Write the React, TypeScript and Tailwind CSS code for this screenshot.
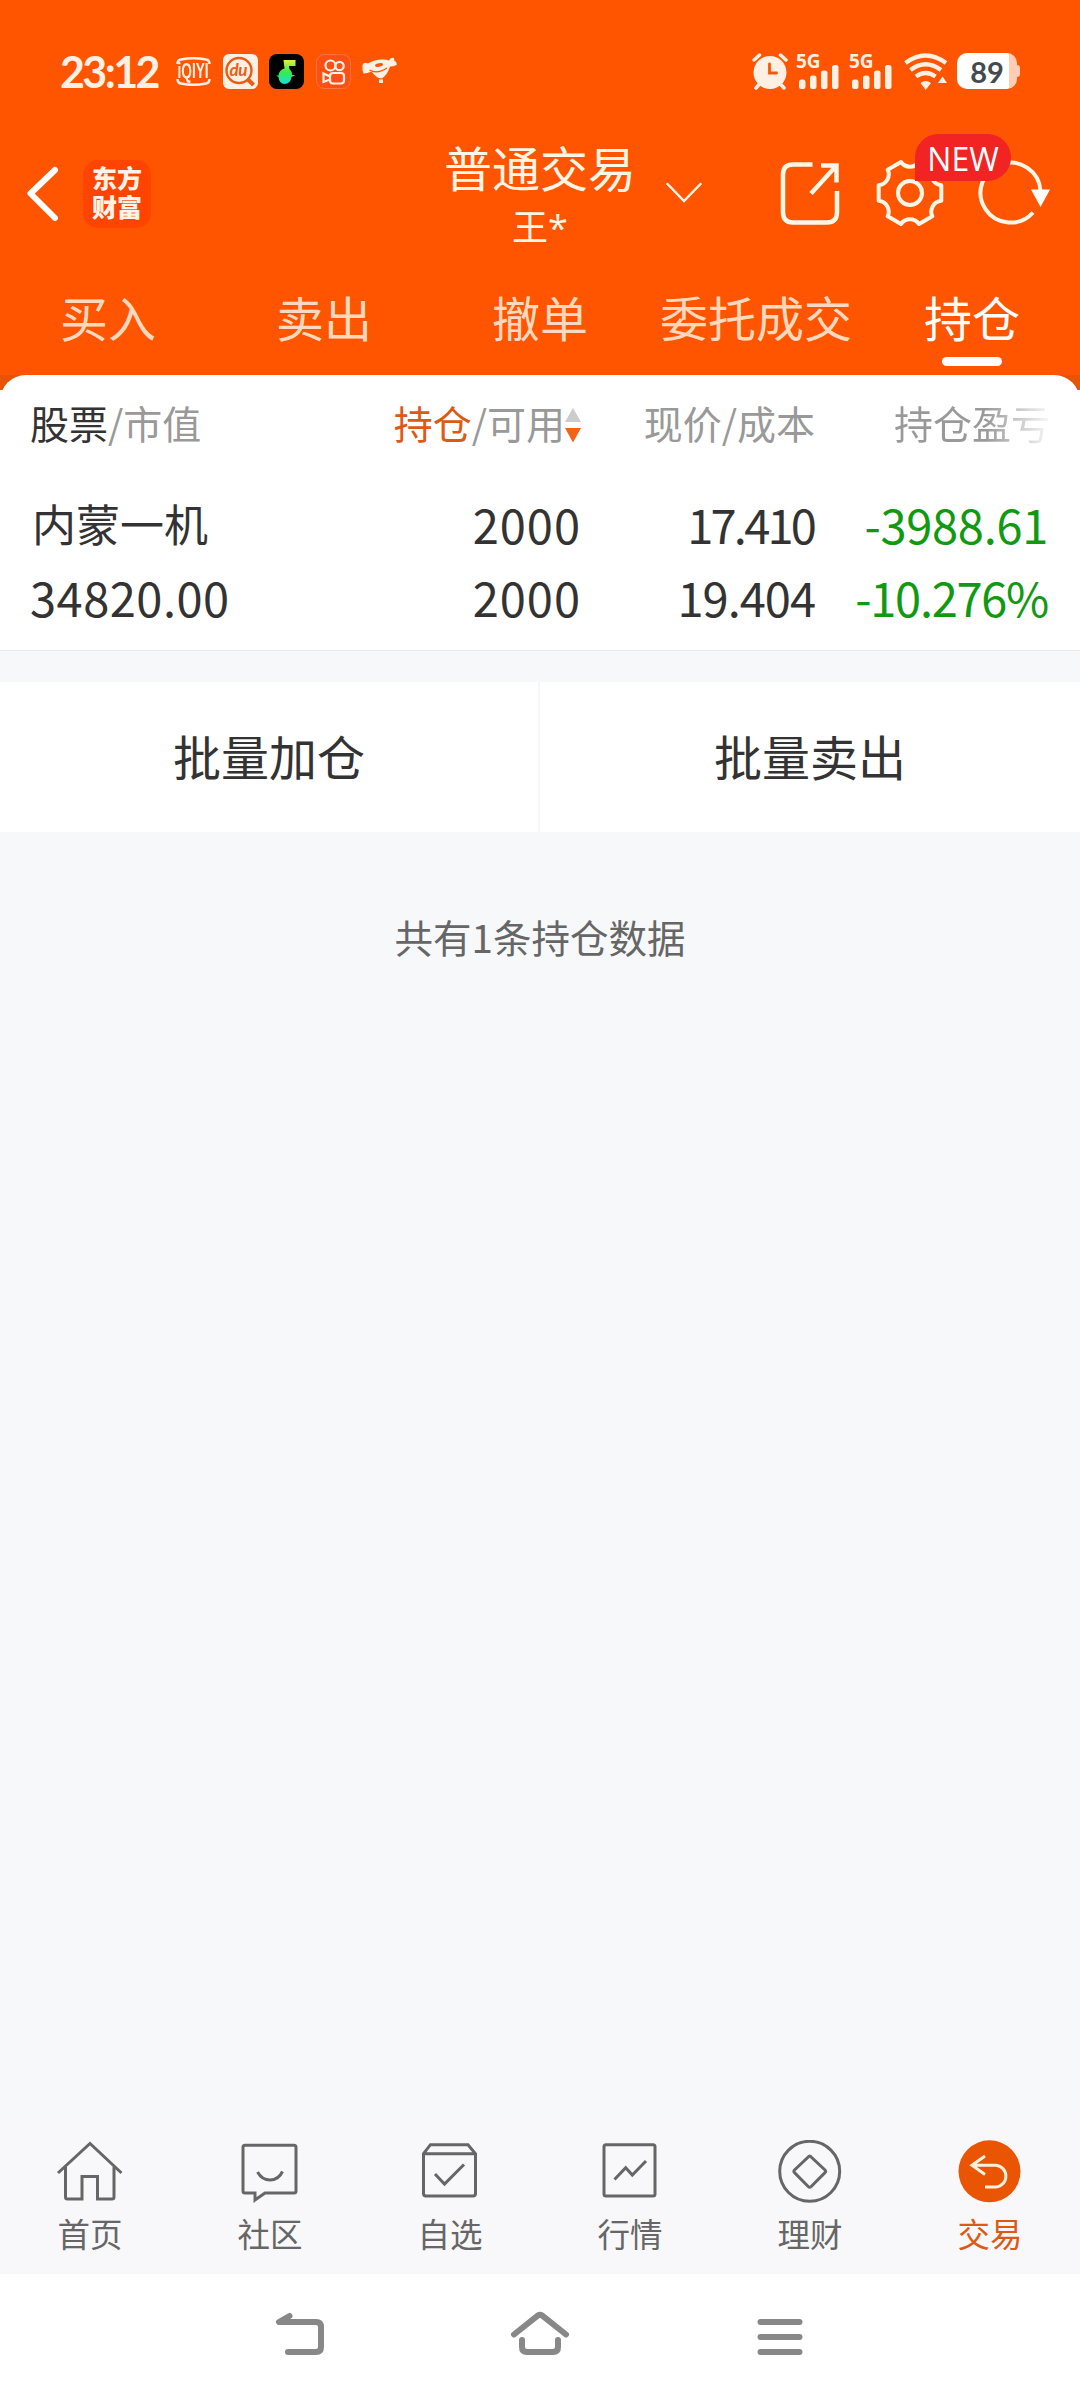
import type { ReactNode } from 'react'

interface TabItem {
  label: string
  active?: boolean
  icon?: ReactNode
}

const TRADE_TABS: TabItem[] = [
  { label: '买入' },
  { label: '卖出' },
  { label: '撤单' },
  { label: '委托成交' },
  { label: '持仓', active: true },
]

const BOTTOM_TABS: TabItem[] = [
  {
    label: '首页',
    icon: (
      <>
        <path d="M4 33 L36 3.5 L67.500 33" />
        <path d="M11.500 27 V57 Q11.500 59 13.500 59 H28 V36.500 H43.500 V59 H58 Q60 59 60 57 V27" />
      </>
    ),
  },
  {
    label: '社区',
    icon: (
      <>
        <path d="M11 5.300 H60 Q62 5.300 62 7.300 V51 Q62 53 60 53 H31 L21 60 V53 H11 Q9 53 9 51 V7.300 Q9 5.300 11 5.300 Z" />
        <path d="M23.500 32 Q28 40 36 40 Q44.500 40 48.500 31.500" />
      </>
    ),
  },
  {
    label: '自选',
    icon: (
      <>
        <path d="M9.500 13.700 L16.500 4.700 H54 L61.500 13.700 V53.500 Q61.500 56 59 56 H12 Q9.500 56 9.500 53.500 Z M9.500 13.700 H61.500" />
        <path d="M21 34 L30.500 44 L50 24.500" />
      </>
    ),
  },
  {
    label: '行情',
    icon: (
      <>
        <rect x="10" y="4.700" width="51" height="51.300" rx="2" />
        <path d="M20.500 39.500 L31.700 27.700 L38.300 35 L52 21" />
      </>
    ),
  },
  {
    label: '理财',
    icon: (
      <>
        <circle cx="35.700" cy="31.300" r="30" />
        <path d="M34.200 17 Q35.700 15 37.200 17 L51 30 Q52.200 31.300 51 32.600 L37.200 46.500 Q35.700 48 34.200 46.500 L20.500 32.600 Q19.300 31.300 20.500 30 Z" />
      </>
    ),
  },
  {
    label: '交易',
    active: true,
    icon: (
      <>
        <circle cx="35.500" cy="31.300" r="31" fill="#ea5504" stroke="none" />
        <path d="M31 16 L18 25.300 L31 34.500 M18 25.300 H42 A10.900 10.900 0 0 1 42 47 H31" stroke="#fff0dc" strokeLinecap="butt" />
      </>
    ),
  },
]

function SignalIcon() {
  return (
    <div className="flex w-[43px] flex-col">
      <span className="-ml-[2px] h-[13px] font-['Open_Sans'] text-[19px] leading-[14px] font-bold">5G</span>
      <svg viewBox="0 0 43 24" className="-mt-[2px] h-6 w-[43px]" fill="currentColor">
        <rect x="1" y="14.500" width="6.500" height="9.500" rx="2.500" />
        <rect x="12" y="10.500" width="6.500" height="13.500" rx="2.500" />
        <rect x="23" y="5.500" width="6.500" height="18.500" rx="2.500" />
        <rect x="34" y="0" width="6.500" height="24" rx="2.500" />
      </svg>
    </div>
  )
}

function StatusBar() {
  return (
    <div className="flex h-[110px] items-center pt-8 pl-[60px] text-[#fff0e4]">
      <span className="w-[116px] shrink-0 font-['Lato'] text-[43px] leading-none font-bold tracking-[-2.600px]">23:12</span>

      {/* Notification icons */}
      <div className="flex items-center gap-[11.500px]">
        <div className="relative flex h-[29px] w-[35px] items-center justify-center">
          <svg viewBox="0 0 35 29" className="absolute inset-0" fill="none" stroke="currentColor" strokeWidth="2.500">
            <path d="M1.500 7 Q1.500 3 5 2.500 Q17.500 0 30 2.500 Q33.500 3 33.500 7 M1.500 22 Q1.500 26 5 26.500 Q17.500 29 30 26.500 Q33.500 26 33.500 22" />
          </svg>
          <span className="shrink-0 scale-x-[0.62] font-['Liberation_Sans'] text-[22px] leading-none font-bold">iQIYI</span>
        </div>
        <div className="relative flex size-[35px] rounded-[6px] bg-[#fff0e4] text-[#ea5c14]">
          <svg viewBox="0 0 35 35" className="absolute inset-0" fill="none" stroke="currentColor">
            <circle cx="16" cy="16.500" r="12.500" strokeWidth="2.400" />
            <path d="M25 25.500 L30.500 31" strokeWidth="4" />
          </svg>
          <span className="ml-[7px] font-['Lato'] text-[17px] leading-[31px] font-bold tracking-[-0.500px] italic">du</span>
        </div>
        <svg viewBox="0 0 35 35" className="size-[35px]">
          <defs>
            <linearGradient id="note" x1="0" y1="0" x2="0" y2="1">
              <stop offset="0" stopColor="#e5f03c" />
              <stop offset="0.500" stopColor="#35ec4e" />
              <stop offset="1" stopColor="#18dfd8" />
            </linearGradient>
          </defs>
          <rect width="35" height="35" rx="8" fill="#000" />
          <path d="M14.500 6 H26.500 V12 H20 L20.500 15 Q23 17 23 21 H26.500 L22.500 23 Q21.500 30 15.500 30 Q10 29.500 9.500 23 L7 21.500 H9.500 Q10 16 15.500 14.500 Z" fill="url(#note)" />
        </svg>
        <svg viewBox="0 0 35 35" className="size-[35px]" fill="none" stroke="currentColor" strokeWidth="2.200">
          <rect x="0.500" y="0.500" width="34" height="34" rx="8" fill="#ff4f12" stroke="#ff7440" strokeWidth="1" />
          <circle cx="14.500" cy="11.500" r="5" />
          <circle cx="23.500" cy="12" r="4.200" />
          <rect x="14" y="19" width="14" height="10.500" rx="3" />
          <path d="M14 22.500 L7.500 19.500 V28 L14 25.500" />
        </svg>
        <svg viewBox="0 0 35 28" className="h-7 w-[35px]">
          <path d="M0.500 8 Q2 4.500 6 6.500 Q13 2.500 20 2.500 Q25 2.500 27 3.500 Q28.500 0 32 1 L32.500 4 Q35.500 5 34.500 8 Q30 10 28 9.500 Q25 19 19.500 21.500 Q14 21 9.500 14.500 Q4 17 1.500 16.500 L0.500 13 Z M17 22.500 H21 V26 H17 Z" fill="currentColor" />
          <path d="M7.500 13 Q15 17.500 25 11" fill="none" stroke="#ff5500" strokeWidth="1.200" />
          <ellipse cx="17" cy="8" rx="4" ry="1.800" fill="#ff5500" transform="rotate(-12 17 8)" />
        </svg>
      </div>

      {/* System icons */}
      <div className="ml-[355px] flex items-center">
        <svg viewBox="0 0 36 37" className="h-[37px] w-9" fill="none" stroke="currentColor" strokeLinecap="round">
          <circle cx="18" cy="19.500" r="16.500" fill="currentColor" stroke="none" />
          <path d="M2 7 L7.500 2 M34 7 L28.500 2 M4 35 L7.500 31 M32 35 L28.500 31" strokeWidth="3.500" />
          <path d="M17.500 11 V20 H24.500" stroke="#ff5500" strokeWidth="2.800" />
        </svg>
        <div className="ml-[10px] flex gap-[10px]">
          <SignalIcon />
          <SignalIcon />
        </div>
        <svg viewBox="0 0 44 37" className="ml-[10px] h-[37px] w-11" fill="none" stroke="currentColor" strokeWidth="4.200">
          <path d="M1.500 10 Q21.500 -5 42 10 M6.500 17 Q21.500 5.500 37 17 M12 23.500 Q21.500 16.500 31.500 23.500" />
          <path d="M16.500 30 Q21.500 26 27 30 L21.700 37 Z M34 30 L38.500 23.500 L43 30 Z" fill="currentColor" stroke="none" />
        </svg>
        <div className="ml-[9px] flex items-center">
          <div className="flex h-9 w-[60px] items-center justify-center rounded-[10px] bg-[linear-gradient(90deg,#fff_52px,#ffcdb4_52px)] font-['Lato'] text-[29px] leading-none font-bold text-[#444a50]">
            89
          </div>
          <div className="h-3 w-[3px] rounded-r-sm bg-[#ffcdb4]" />
        </div>
      </div>
    </div>
  )
}

function Header() {
  return (
    <div className="grid h-[168px] grid-cols-[1fr_192px_1fr]">
      <div className="flex pt-[50px] pl-6">
        <svg viewBox="0 0 38 66" className="h-[66px] w-[38px]" fill="none" stroke="#fff" strokeWidth="6" strokeLinecap="round">
          <path d="M31 10 L6.500 33.500 L31 58" strokeLinejoin="round" />
        </svg>
        <div className="ml-[21px] h-[68px] w-[68px] rounded-[15px] bg-[#ff4400] px-[9px] pt-[3px] text-[25px] leading-[29px] font-black break-all text-[#fff3ea]">
          东方财富
        </div>
      </div>

      <div className="pt-[30px] text-center text-[#fff6e6]">
        <div className="text-[48px] leading-[52px] whitespace-nowrap">普通交易</div>
        <div className="mt-[13px] text-[36px] leading-[40px]">
          王<span className="font-['Open_Sans']">*</span>
        </div>
      </div>

      <div className="flex items-start pt-12 pl-[30px]">
        <svg viewBox="0 0 36 68" className="h-[68px] w-9" fill="none" stroke="#fff6e6" strokeWidth="2.500">
          <path d="M1.500 26 L18 43 L34.500 26" strokeLinecap="round" />
        </svg>
        <svg viewBox="0 0 60 68" className="ml-[78px] h-[68px] w-[60px]" fill="none" stroke="#fff6e6" strokeWidth="4.500">
          <path d="M32.500 6.500 H13 Q3 6.500 3 16.500 V54 Q3 64.500 13 64.500 H47 Q57 64.500 57 54 V33" />
          <path d="M41 7.500 H56.500 V24.500 M56.500 7.500 L31 35.500" />
        </svg>
        <div className="relative ml-9">
          <svg viewBox="-34 -35 68 68" className="size-[68px]" fill="none" stroke="#fff6e6" strokeWidth="4" strokeLinejoin="round">
            <path d="M31.300 -7.700 V7.700 A11 11 0 0 0 22.300 23.300 L9 31 A11 11 0 0 0 -9 31 L-22.300 23.300 A11 11 0 0 0 -31.300 7.700 V-7.700 A11 11 0 0 0 -22.300 -23.300 L-9 -31 A11 11 0 0 0 9 -31 L22.300 -23.300 A11 11 0 0 0 31.300 -7.700 Z" />
            <circle r="12" />
          </svg>
          <div className="absolute -top-6 left-[39px] z-10 h-[47px] w-24 rounded-full rounded-bl-none bg-[#f12323] text-center font-['Open_Sans'] text-[32px] leading-[49px] text-white">
            NEW
          </div>
        </div>
        <svg viewBox="0 0 72 68" className="ml-[34px] h-[68px] w-[72px]" fill="none" stroke="#fff6e6" strokeWidth="4">
          <path d="M62.500 33 A30 30 0 1 0 55 54.500" />
          <path d="M53 31.500 H72 L62.500 49 Z" fill="#fff" stroke="none" />
        </svg>
      </div>
    </div>
  )
}

function TradeTabs() {
  return (
    <div className="grid h-[97px] grid-cols-5 text-[48px] leading-[56px]">
      {TRADE_TABS.map(tab => (
        <div key={tab.label} className={`flex flex-col items-center pt-[10px] whitespace-nowrap ${tab.active ? 'text-white' : 'text-[#ffd9bf]'}`}>
          {tab.label}
          {tab.active && <div className="mt-[13px] h-[9px] w-[60px] rounded-full bg-white" />}
        </div>
      ))}
    </div>
  )
}

function Holdings() {
  return (
    <div className="bg-[linear-gradient(#e85406_15px,#fff_15px)]">
      <div className="h-[275px] rounded-t-[26px] bg-white pr-8 pl-[30px]">
        <div className="grid h-[94px] grid-cols-[1fr_234px_233px] items-center text-right text-[39px] text-[#999]">
          <div className="grid grid-cols-2 items-center">
            <div className="text-left">
              <span className="text-[#333]">股票</span>/市值
            </div>
            <div className="flex items-center justify-end">
              <span className="text-[#dd5a14]">持仓</span>/可用
              <svg viewBox="0 0 16 36" className="mt-[6px] h-9 w-4">
                <path d="M8 1 L16 15 H0 Z" fill="#ccc" />
                <path d="M0 21 H16 L8 35.500 Z" fill="#f0641a" />
              </svg>
            </div>
          </div>
          <div>现价/成本</div>
          <div className="-mr-[2px] bg-[linear-gradient(90deg,#999_170px,#fff_240px)] bg-clip-text text-transparent">持仓盈亏</div>
        </div>

        <div className="mt-[18px] grid grid-cols-[1fr_234px_233px] text-right text-[47px] leading-[73px] text-[#333]">
          <div className="grid grid-cols-2">
            <div className="pl-[2px] text-left text-[44px]">内蒙一机</div>
            <div className="tracking-[1px]">2000</div>
            <div className="text-left tracking-[0.500px]">34820.00</div>
            <div className="tracking-[1px]">2000</div>
          </div>
          <div>
            <div className="pr-[1px] tracking-[-2.800px]">17.410</div>
            <div className="tracking-[-1px]">19.404</div>
          </div>
          <div className="text-[#119911]">
            <div className="tracking-[-0.300px]">-3988.61</div>
            <div className="tracking-[-1.300px]">-10.276%</div>
          </div>
        </div>
      </div>
      <div className="h-px bg-[#e8ebee]" />
    </div>
  )
}

function BottomTabs() {
  return (
    <div className="grid h-[156px] grid-cols-6 bg-[#f8f8fa]">
      {BOTTOM_TABS.map(tab => (
        <div key={tab.label} className={`flex flex-col items-center pt-[22px] ${tab.active ? 'text-[#dd5a14]' : 'text-[#666]'}`}>
          <svg viewBox="0 0 72 64" className="h-16 w-[72px]" fill="none" stroke="currentColor" strokeWidth="3">
            {tab.icon}
          </svg>
          <span className="mt-[8px] text-[32.500px] leading-[42px]">{tab.label}</span>
        </div>
      ))}
    </div>
  )
}

function SystemNav() {
  return (
    <div className="grid h-[126px] grid-cols-3 justify-items-center bg-white px-[180px] pt-8">
      <svg viewBox="0 0 60 60" className="size-[60px]" fill="none" stroke="#888" strokeWidth="6" strokeLinecap="round">
        <path d="M19.500 10 L9 16 H46 Q51 16 51 21 V41 Q51 46 46 46 H18" strokeLinejoin="round" />
      </svg>
      <svg viewBox="0 0 60 60" className="size-[60px]" fill="none" stroke="#888" strokeWidth="6" strokeLinecap="round">
        <path d="M4 28.500 L28 9.500 Q30 8 32 9.500 L56 28.500 M12 34 V41 Q12 46 17 46 H43 Q48 46 48 41 V34" />
      </svg>
      <svg viewBox="0 0 60 60" className="size-[60px]" fill="none" stroke="#888" strokeWidth="6" strokeLinecap="round">
        <path d="M10.500 16 H49.500 M10.500 31 H49.500 M10.500 46 H49.500" />
      </svg>
    </div>
  )
}

export default function App() {
  return (
    <div className="flex h-[2400px] w-[1080px] flex-col overflow-hidden bg-[#f7f8fa] font-['Noto_Sans_CJK_SC',sans-serif]">
      <div className="bg-[#ff5500]">
        <StatusBar />
        <Header />
        <TradeTabs />
      </div>
      <Holdings />

      {/* Batch actions */}
      <div className="mt-[31px] grid h-[150px] grid-cols-2 bg-white text-center text-[48px] leading-[147px] text-[#333]">
        <div className="border-r-2 border-[#f5f6f8]">批量加仓</div>
        <div>批量卖出</div>
      </div>

      <div className="mt-[76px] text-center text-[38.500px] leading-[56px] text-[#666]">共有1条持仓数据</div>

      <div className="mt-auto">
        <BottomTabs />
        <SystemNav />
      </div>
    </div>
  )
}
